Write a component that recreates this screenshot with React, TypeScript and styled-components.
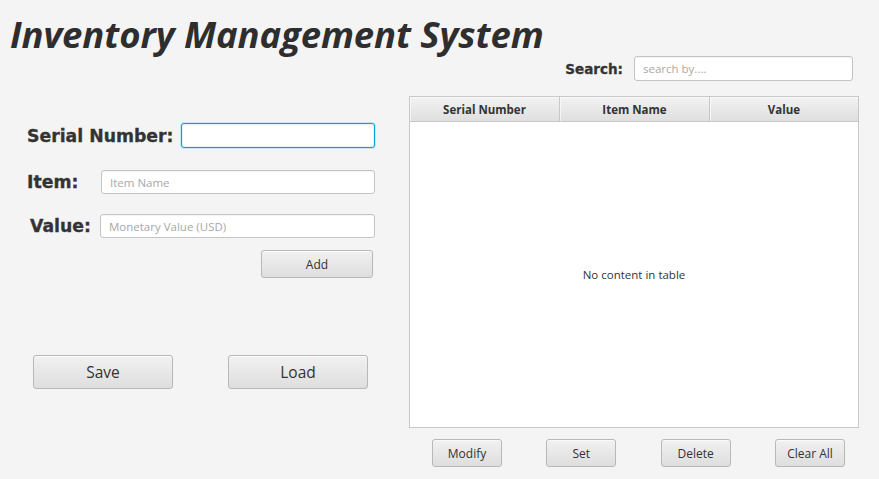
import React from "react";
import styled, { createGlobalStyle } from "styled-components";

const Global = createGlobalStyle`
  html, body { margin: 0; padding: 0; background: #f4f4f4; }
  body {
    width: 879px; height: 479px; overflow: hidden;
    font-family: "Open Sans", "Noto Sans", sans-serif; color: #333;
  }
  * { box-sizing: border-box; }
`;

const Window = styled.div`
  width: 879px;
  height: 479px;
  display: flex;
  flex-direction: column;
  background: #f4f4f4;
`;

const Title = styled.h1`
  margin: 0;
  height: 56px;
  padding: 16px 0 0 10px;
  font-family: "Open Sans", sans-serif;
  font-style: italic;
  font-weight: 700;
  font-size: 36.5px;
  line-height: 36px;
  letter-spacing: -0.1px;
  color: #2e2e2e;
`;

const Body = styled.div`
  display: grid;
  grid-template-columns: 409px 450px;
  flex: 1;
`;

const LeftColumn = styled.div`
  display: flex;
  flex-direction: column;
  padding-top: 67px;
`;

const FieldRow = styled.div<{ $pad: number; $gap: number; $h: number }>`
  display: flex;
  align-items: center;
  justify-content: space-between;
  width: 375px;
  height: ${(p) => p.$h}px;
  padding-left: ${(p) => p.$pad}px;
  margin-top: ${(p) => p.$gap}px;
`;

const Label = styled.label<{ $size: number }>`
  font-family: "DejaVu Sans", sans-serif;
  font-weight: 700;
  font-size: ${(p) => p.$size}px;
  color: #333;
  white-space: nowrap;
  -webkit-text-stroke: 0.3px #333;
`;

const TextField = styled.input<{ $w: number; $h: number; $focused?: boolean }>`
  width: ${(p) => p.$w}px;
  height: ${(p) => p.$h}px;
  padding: 0 8px;
  border-radius: 3px;
  font-family: "Open Sans", sans-serif;
  font-size: 11.5px;
  color: #333;
  background: #fff;
  outline: none;
  border: 1px solid ${(p) => (p.$focused ? "#0a9fd8" : "#c4c4c4")};
  box-shadow: ${(p) =>
    p.$focused
      ? "0 0 0 1px #c6e6f4, inset 0 0 0 1px #e4f3fa"
      : "inset 0 1px 1px rgba(0,0,0,0.04)"};
  &::placeholder { color: #a8a8a8; }
`;

const Button = styled.button<{ $w: number; $h: number; $fs: number }>`
  width: ${(p) => p.$w}px;
  height: ${(p) => p.$h}px;
  padding: 0;
  border: 1px solid #b8b8b8;
  border-radius: 3px;
  background: linear-gradient(#f1f1f1, #dedede);
  box-shadow: inset 0 1px 0 rgba(255,255,255,0.7);
  font-family: "Open Sans", sans-serif;
  font-size: ${(p) => p.$fs}px;
  color: #333;
  cursor: pointer;
`;

const AddRow = styled.div`
  display: flex;
  justify-content: flex-end;
  width: 373px;
  margin-top: 12px;
`;

const FileRow = styled.div`
  display: flex;
  gap: 55px;
  padding-left: 33px;
  margin-top: 77px;
`;

const RightColumn = styled.div`
  display: flex;
  flex-direction: column;
`;

const SearchRow = styled.div`
  display: flex;
  justify-content: flex-end;
  align-items: center;
  gap: 11px;
  height: 25px;
  padding-right: 6px;
`;

const Table = styled.div`
  margin-top: 15px;
  height: 332px;
  border: 1px solid #c8c8c8;
  background: #fff;
  display: flex;
  flex-direction: column;
`;

const HeaderRow = styled.div`
  display: grid;
  grid-template-columns: 150px 150px 1fr;
  height: 25px;
  border-bottom: 1px solid #c8c8c8;
  background: linear-gradient(#f2f2f2, #dfdfdf);
`;

const HeaderCell = styled.div<{ $last?: boolean }>`
  display: flex;
  align-items: center;
  justify-content: center;
  font-family: "Open Sans", sans-serif;
  font-weight: 700;
  font-size: 11.5px;
  color: #333;
  border-right: ${(p) => (p.$last ? "none" : "1px solid #c8c8c8")};
  box-shadow: inset 1px 1px 0 rgba(255,255,255,0.6);
`;

const EmptyArea = styled.div`
  flex: 1;
  display: flex;
  align-items: center;
  justify-content: center;
  font-family: "Open Sans", sans-serif;
  font-size: 11.5px;
  color: #333;
`;

const ActionRow = styled.div`
  display: flex;
  justify-content: space-between;
  padding: 0 14px 0 23px;
  margin-top: 11px;
`;

export default function App() {
  return (
    <Window>
      <Global />
      <Title>Inventory Management System</Title>
      <Body>
        <LeftColumn>
          <FieldRow $pad={27} $gap={0} $h={25}>
            <Label $size={17.3}>Serial Number:</Label>
            <TextField $w={194} $h={25} $focused />
          </FieldRow>
          <FieldRow $pad={27} $gap={22} $h={24}>
            <Label $size={17.3}>Item:</Label>
            <TextField $w={274} $h={24} placeholder="Item Name" />
          </FieldRow>
          <FieldRow $pad={30} $gap={20} $h={24}>
            <Label $size={17.3}>Value:</Label>
            <TextField $w={275} $h={24} placeholder="Monetary Value (USD)" />
          </FieldRow>
          <AddRow>
            <Button $w={112} $h={28} $fs={12}>Add</Button>
          </AddRow>
          <FileRow>
            <Button $w={140} $h={34} $fs={15.5}>Save</Button>
            <Button $w={140} $h={34} $fs={15.5}>Load</Button>
          </FileRow>
        </LeftColumn>
        <RightColumn>
          <SearchRow>
            <Label $size={13.5}>Search:</Label>
            <TextField $w={219} $h={25} placeholder="search by...." />
          </SearchRow>
          <Table>
            <HeaderRow>
              <HeaderCell>Serial Number</HeaderCell>
              <HeaderCell>Item Name</HeaderCell>
              <HeaderCell $last>Value</HeaderCell>
            </HeaderRow>
            <EmptyArea>No content in table</EmptyArea>
          </Table>
          <ActionRow>
            <Button $w={70} $h={28} $fs={12}>Modify</Button>
            <Button $w={70} $h={28} $fs={12}>Set</Button>
            <Button $w={70} $h={28} $fs={12}>Delete</Button>
            <Button $w={70} $h={28} $fs={12}>Clear All</Button>
          </ActionRow>
        </RightColumn>
      </Body>
    </Window>
  );
}
